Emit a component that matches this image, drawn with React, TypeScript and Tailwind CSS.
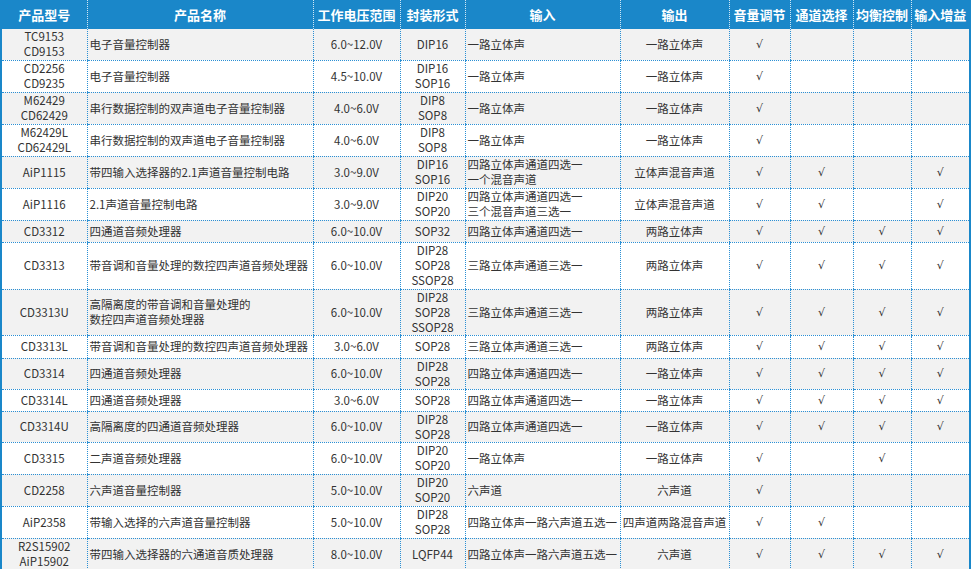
const rows: [string[], string[], string, string[], string[], string, number, string][] = [
  [["TC9153","CD9153"],["电子音量控制器"],"6.0~12.0V",["DIP16"],["一路立体声"],"一路立体声",31,"1000"],
  [["CD2256","CD9235"],["电子音量控制器"],"4.5~10.0V",["DIP16","SOP16"],["一路立体声"],"一路立体声",32,"1000"],
  [["M62429","CD62429"],["串行数据控制的双声道电子音量控制器"],"4.0~6.0V",["DIP8","SOP8"],["一路立体声"],"一路立体声",32,"1000"],
  [["M62429L","CD62429L"],["串行数据控制的双声道电子音量控制器"],"4.0~6.0V",["DIP8","SOP8"],["一路立体声"],"一路立体声",32,"1000"],
  [["AiP1115"],["带四输入选择器的2.1声道音量控制电路"],"3.0~9.0V",["DIP16","SOP16"],["四路立体声通道四选一","一个混音声道"],"立体声混音声道",32,"1101"],
  [["AiP1116"],["2.1声道音量控制电路"],"3.0~9.0V",["DIP20","SOP20"],["四路立体声通道四选一","三个混音声道三选一"],"立体声混音声道",32,"1101"],
  [["CD3312"],["四通道音频处理器"],"6.0~10.0V",["SOP32"],["四路立体声通道四选一"],"两路立体声",22,"1111"],
  [["CD3313"],["带音调和音量处理的数控四声道音频处理器"],"6.0~10.0V",["DIP28","SOP28","SSOP28"],["三路立体声通道三选一"],"两路立体声",47,"1111"],
  [["CD3313U"],["高隔离度的带音调和音量处理的","数控四声道音频处理器"],"6.0~10.0V",["DIP28","SOP28","SSOP28"],["三路立体声通道三选一"],"两路立体声",46,"1111"],
  [["CD3313L"],["带音调和音量处理的数控四声道音频处理器"],"3.0~6.0V",["SOP28"],["三路立体声通道三选一"],"两路立体声",23,"1111"],
  [["CD3314"],["四通道音频处理器"],"6.0~10.0V",["DIP28","SOP28"],["四路立体声通道四选一"],"一路立体声",31,"1111"],
  [["CD3314L"],["四通道音频处理器"],"3.0~6.0V",["SOP28"],["四路立体声通道四选一"],"一路立体声",22,"1111"],
  [["CD3314U"],["高隔离度的四通道音频处理器"],"6.0~10.0V",["DIP28","SOP28"],["四路立体声通道四选一"],"一路立体声",31,"1111"],
  [["CD3315"],["二声道音频处理器"],"6.0~10.0V",["DIP20","SOP20"],["一路立体声"],"一路立体声",32,"1010"],
  [["CD2258"],["六声道音量控制器"],"5.0~10.0V",["DIP20","SOP20"],["六声道"],"六声道",32,"1000"],
  [["AiP2358"],["带输入选择的六声道音量控制器"],"5.0~10.0V",["DIP28","SOP28"],["四路立体声一路六声道五选一"],"四声道两路混音声道",32,"1100"],
  [["R2S15902","AiP15902"],["带四输入选择器的六通道音质处理器"],"8.0~10.0V",["LQFP44"],["四路立体声一路六声道五选一"],"六声道",32,"1111"],
];
const widths = [85, 226, 87, 65, 155, 109, 61, 63, 58, 58];
const heads = ["产品型号","产品名称","工作电压范围","封装形式","输入","输出","音量调节","通道选择","均衡控制","输入增益"];
const L = (a: string[]) => a.map((s, i) => <div key={i} className="h-[15px] leading-[15px] whitespace-nowrap overflow-visible">{s}</div>);
export default function App() {
  const td = "border-l border-b border-dotted border-[#2a8fd4] px-[2px] py-0 align-middle";
  return (
    <div className="w-[971px] h-[569px] overflow-hidden bg-white border-x-2 border-[#1a87c9]" style={{ fontFamily: '"Noto Sans CJK SC", sans-serif' }}>
      <table className="border-collapse table-fixed text-[11.5px] leading-[15px] text-[#333]" style={{ width: 967 }}>
        <colgroup>{widths.map((w, i) => <col key={i} style={{ width: w }} />)}</colgroup>
        <thead>
          <tr className="h-[29px] bg-[#1a87c9] text-white text-[13px] font-bold">
            {heads.map((h, i) => <th key={i} className={`${i ? "border-l border-dotted border-white/80" : ""} p-0 text-center whitespace-nowrap`}>{h}</th>)}
          </tr>
        </thead>
        <tbody>
          {rows.map((r, i) => (
            <tr key={i} className={i % 2 === 0 ? "bg-[#f2f2f2]" : "bg-white"} style={{ height: r[6] }}>
              <td className="border-b border-dotted border-[#2a8fd4] p-0 text-center">{L(r[0])}</td>
              <td className={td + " text-left"}>{L(r[1])}</td>
              <td className={td + " text-center"}>{L([r[2]])}</td>
              <td className={td + " text-center"}>{L(r[3])}</td>
              <td className={td + " text-left"}>{L(r[4])}</td>
              <td className={td + " text-center"}>{L([r[5]])}</td>
              {r[7].split("").map((c, j) => <td key={j} className={td + " text-center"} style={{ fontFamily: '"DejaVu Sans", sans-serif', fontSize: 11 }}>{c === "1" ? "√" : ""}</td>)}
            </tr>
          ))}
        </tbody>
      </table>
    </div>
  );
}
